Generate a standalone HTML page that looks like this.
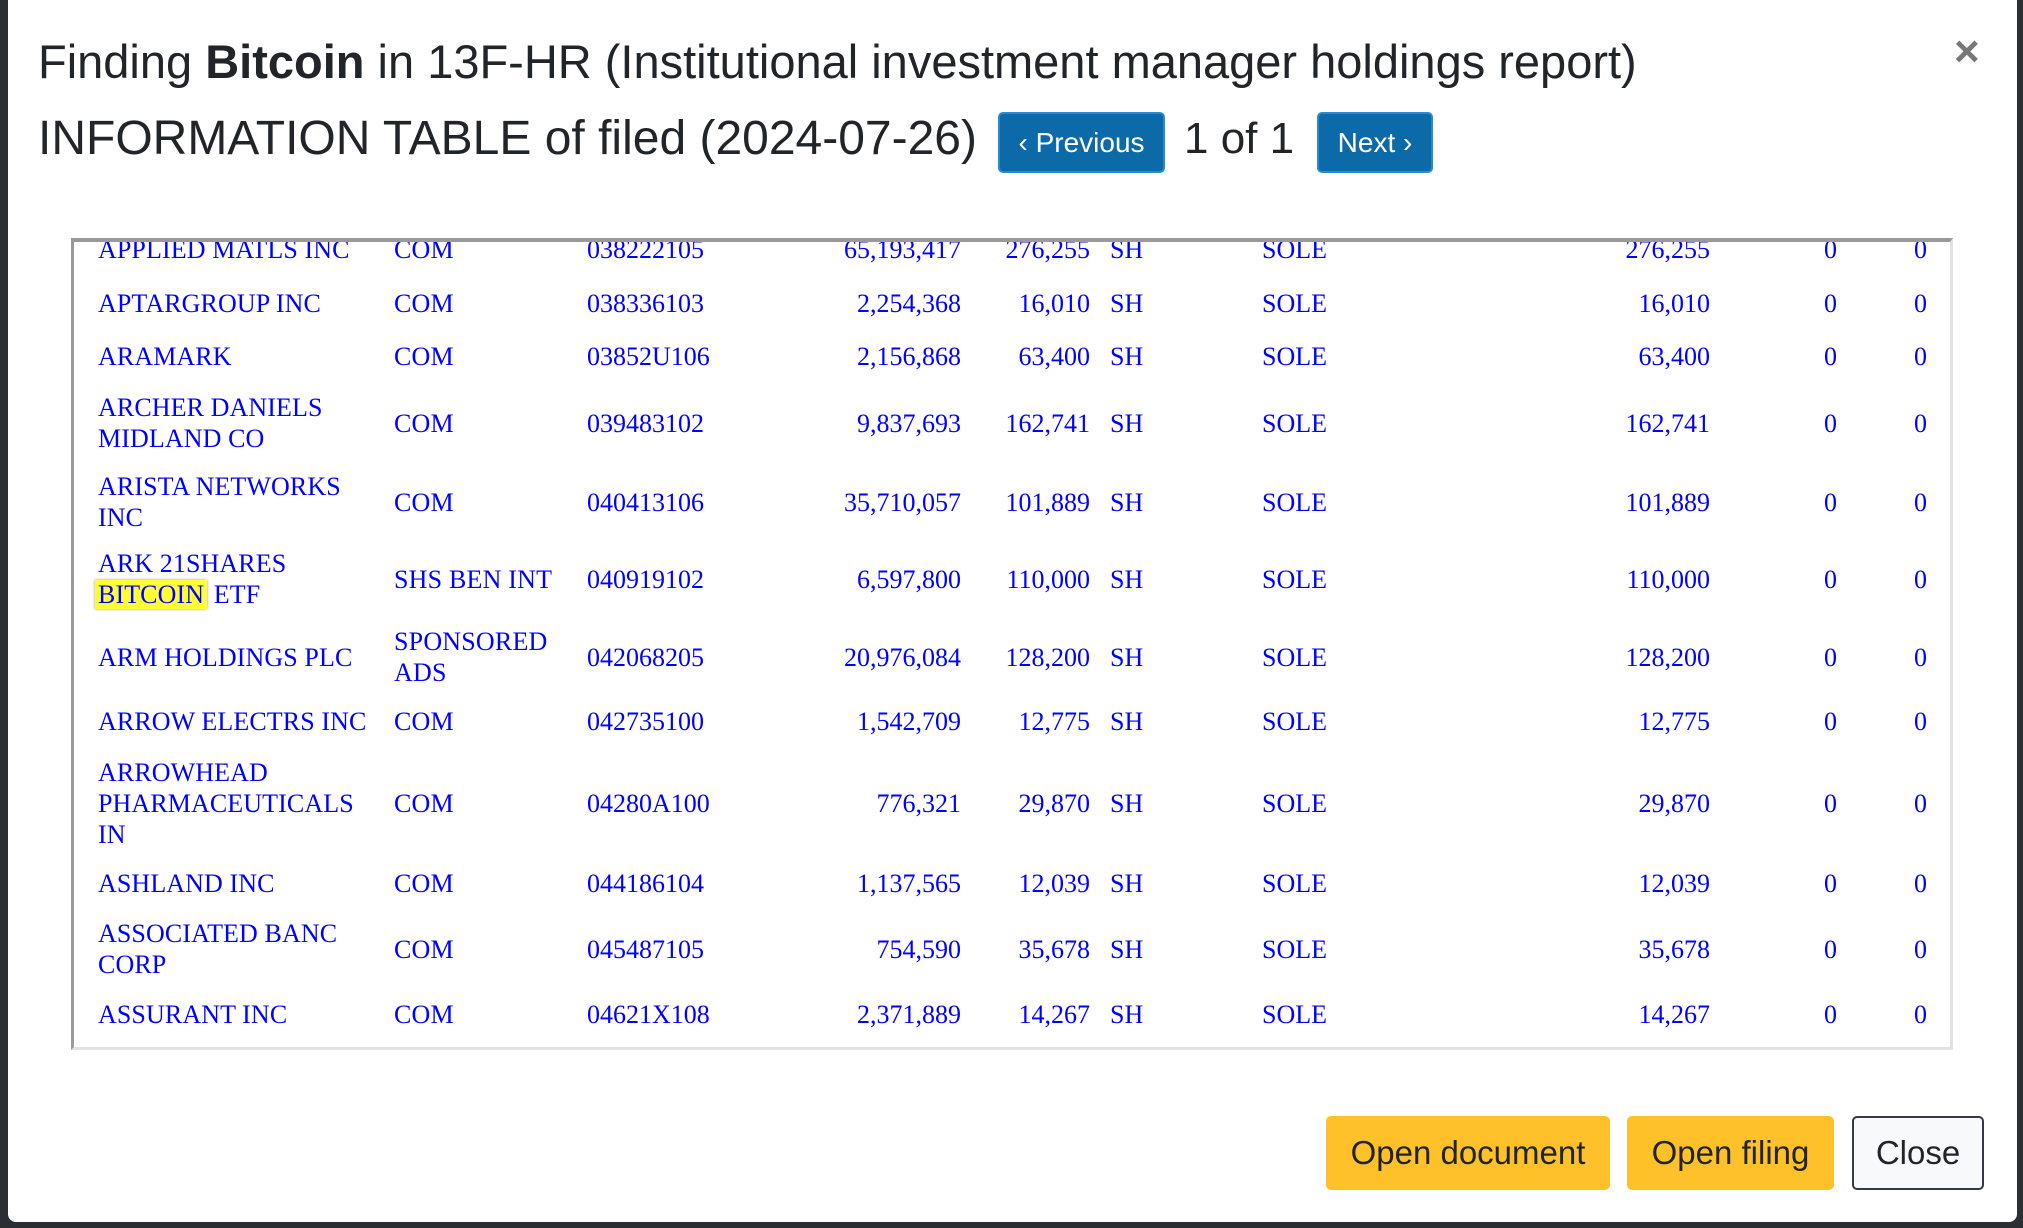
<!DOCTYPE html>
<html><head><meta charset="utf-8"><style>
html,body{margin:0;padding:0;}
body{width:2023px;height:1228px;background:#2b2f33;position:relative;overflow:hidden;font-family:"Liberation Sans",sans-serif;}
.modal{position:absolute;left:8px;top:0;width:2009px;height:1222px;background:#fff;border-radius:0 0 8px 8px;}
.t{position:absolute;left:30px;font-size:48px;color:#212529;white-space:nowrap;line-height:1;}
.btn{position:absolute;box-sizing:border-box;display:flex;align-items:center;justify-content:center;border-radius:5px;white-space:nowrap;}
.pb{background:#0d6aa8;color:#fff;border:2px solid #2a8ad0;font-size:28px;}
.frame{position:absolute;left:71px;top:238px;width:1882px;height:812px;border-top:4px solid #9a9a9a;border-left:3px solid #9a9a9a;border-right:3px solid #e2e2e2;border-bottom:3px solid #e2e2e2;box-sizing:border-box;overflow:hidden;}
.r{position:absolute;left:0;width:2023px;font-family:"Liberation Serif",serif;font-size:26px;letter-spacing:0;color:#0000ff;line-height:31px;}
.r>div{position:absolute;top:0;height:100%;display:flex;align-items:center;white-space:nowrap;}
.a{left:98px;letter-spacing:0.1px}.b{left:394px;letter-spacing:0.2px}.c{left:587px}
.d{left:761px;width:200px;justify-content:flex-end}
.e{left:990px;width:100px;justify-content:flex-end}
.f{left:1110px}.g{left:1262px}
.h{left:1510px;width:200px;justify-content:flex-end}
.i{left:1737px;width:100px;justify-content:flex-end}
.j{left:1827px;width:100px;justify-content:flex-end}
.hl{background:#ffff33;box-shadow:0 0 3px #999;padding:0 3px;margin-left:-3px;}
.yb{background:#ffc12a;color:#212529;font-size:33px;border:none;}
</style></head><body>
<div class="modal">
<div class="t" style="top:38px;font-size:47px">Finding <b>Bitcoin</b> in 13F-HR (Institutional investment manager holdings report)</div>
<div class="t" style="top:115px">INFORMATION TABLE of filed (2024-07-26)</div>
<div class="btn pb" style="left:990px;top:112px;width:167px;height:61px">‹ Previous</div>
<div class="t" style="left:1176px;top:117px;font-size:44px">1 of 1</div>
<div class="btn pb" style="left:1309px;top:112px;width:116px;height:61px">Next ›</div>
<div style="position:absolute;left:1946px;top:30px;font-size:44px;color:#777;font-weight:bold;line-height:1">×</div>
</div>
<div class="frame"></div>
<div style="position:absolute;left:0;top:0;width:2023px;height:1050px;overflow:hidden;clip-path:inset(242px 0 0 0)">
<div class="r" style="top:234px;height:31px"><div class="a"><span>APPLIED MATLS INC</span></div><div class="b">COM</div><div class="c">038222105</div><div class="d">65,193,417</div><div class="e">276,255</div><div class="f">SH</div><div class="g">SOLE</div><div class="h">276,255</div><div class="i">0</div><div class="j">0</div></div>
<div class="r" style="top:288px;height:31px"><div class="a"><span>APTARGROUP INC</span></div><div class="b">COM</div><div class="c">038336103</div><div class="d">2,254,368</div><div class="e">16,010</div><div class="f">SH</div><div class="g">SOLE</div><div class="h">16,010</div><div class="i">0</div><div class="j">0</div></div>
<div class="r" style="top:341px;height:31px"><div class="a"><span>ARAMARK</span></div><div class="b">COM</div><div class="c">03852U106</div><div class="d">2,156,868</div><div class="e">63,400</div><div class="f">SH</div><div class="g">SOLE</div><div class="h">63,400</div><div class="i">0</div><div class="j">0</div></div>
<div class="r" style="top:392px;height:62px"><div class="a"><span>ARCHER DANIELS<br>MIDLAND CO</span></div><div class="b">COM</div><div class="c">039483102</div><div class="d">9,837,693</div><div class="e">162,741</div><div class="f">SH</div><div class="g">SOLE</div><div class="h">162,741</div><div class="i">0</div><div class="j">0</div></div>
<div class="r" style="top:471px;height:62px"><div class="a"><span>ARISTA NETWORKS<br>INC</span></div><div class="b">COM</div><div class="c">040413106</div><div class="d">35,710,057</div><div class="e">101,889</div><div class="f">SH</div><div class="g">SOLE</div><div class="h">101,889</div><div class="i">0</div><div class="j">0</div></div>
<div class="r" style="top:548px;height:62px"><div class="a"><span>ARK 21SHARES<br><span class="hl">BITCOIN</span> ETF</span></div><div class="b">SHS BEN INT</div><div class="c">040919102</div><div class="d">6,597,800</div><div class="e">110,000</div><div class="f">SH</div><div class="g">SOLE</div><div class="h">110,000</div><div class="i">0</div><div class="j">0</div></div>
<div class="r" style="top:626px;height:62px"><div class="a"><span>ARM HOLDINGS PLC</span></div><div class="b"><span>SPONSORED<br>ADS</span></div><div class="c">042068205</div><div class="d">20,976,084</div><div class="e">128,200</div><div class="f">SH</div><div class="g">SOLE</div><div class="h">128,200</div><div class="i">0</div><div class="j">0</div></div>
<div class="r" style="top:706px;height:31px"><div class="a"><span>ARROW ELECTRS INC</span></div><div class="b">COM</div><div class="c">042735100</div><div class="d">1,542,709</div><div class="e">12,775</div><div class="f">SH</div><div class="g">SOLE</div><div class="h">12,775</div><div class="i">0</div><div class="j">0</div></div>
<div class="r" style="top:757px;height:93px"><div class="a"><span>ARROWHEAD<br>PHARMACEUTICALS<br>IN</span></div><div class="b">COM</div><div class="c">04280A100</div><div class="d">776,321</div><div class="e">29,870</div><div class="f">SH</div><div class="g">SOLE</div><div class="h">29,870</div><div class="i">0</div><div class="j">0</div></div>
<div class="r" style="top:868px;height:31px"><div class="a"><span>ASHLAND INC</span></div><div class="b">COM</div><div class="c">044186104</div><div class="d">1,137,565</div><div class="e">12,039</div><div class="f">SH</div><div class="g">SOLE</div><div class="h">12,039</div><div class="i">0</div><div class="j">0</div></div>
<div class="r" style="top:918px;height:62px"><div class="a"><span>ASSOCIATED BANC<br>CORP</span></div><div class="b">COM</div><div class="c">045487105</div><div class="d">754,590</div><div class="e">35,678</div><div class="f">SH</div><div class="g">SOLE</div><div class="h">35,678</div><div class="i">0</div><div class="j">0</div></div>
<div class="r" style="top:999px;height:31px"><div class="a"><span>ASSURANT INC</span></div><div class="b">COM</div><div class="c">04621X108</div><div class="d">2,371,889</div><div class="e">14,267</div><div class="f">SH</div><div class="g">SOLE</div><div class="h">14,267</div><div class="i">0</div><div class="j">0</div></div>
</div>
<div class="btn yb" style="left:1326px;top:1116px;width:284px;height:74px">Open document</div>
<div class="btn yb" style="left:1627px;top:1116px;width:207px;height:74px">Open filing</div>
<div class="btn" style="left:1852px;top:1116px;width:132px;height:74px;background:#f8f9fa;border:2px solid #343a40;color:#212529;font-size:33px">Close</div>
</body></html>
